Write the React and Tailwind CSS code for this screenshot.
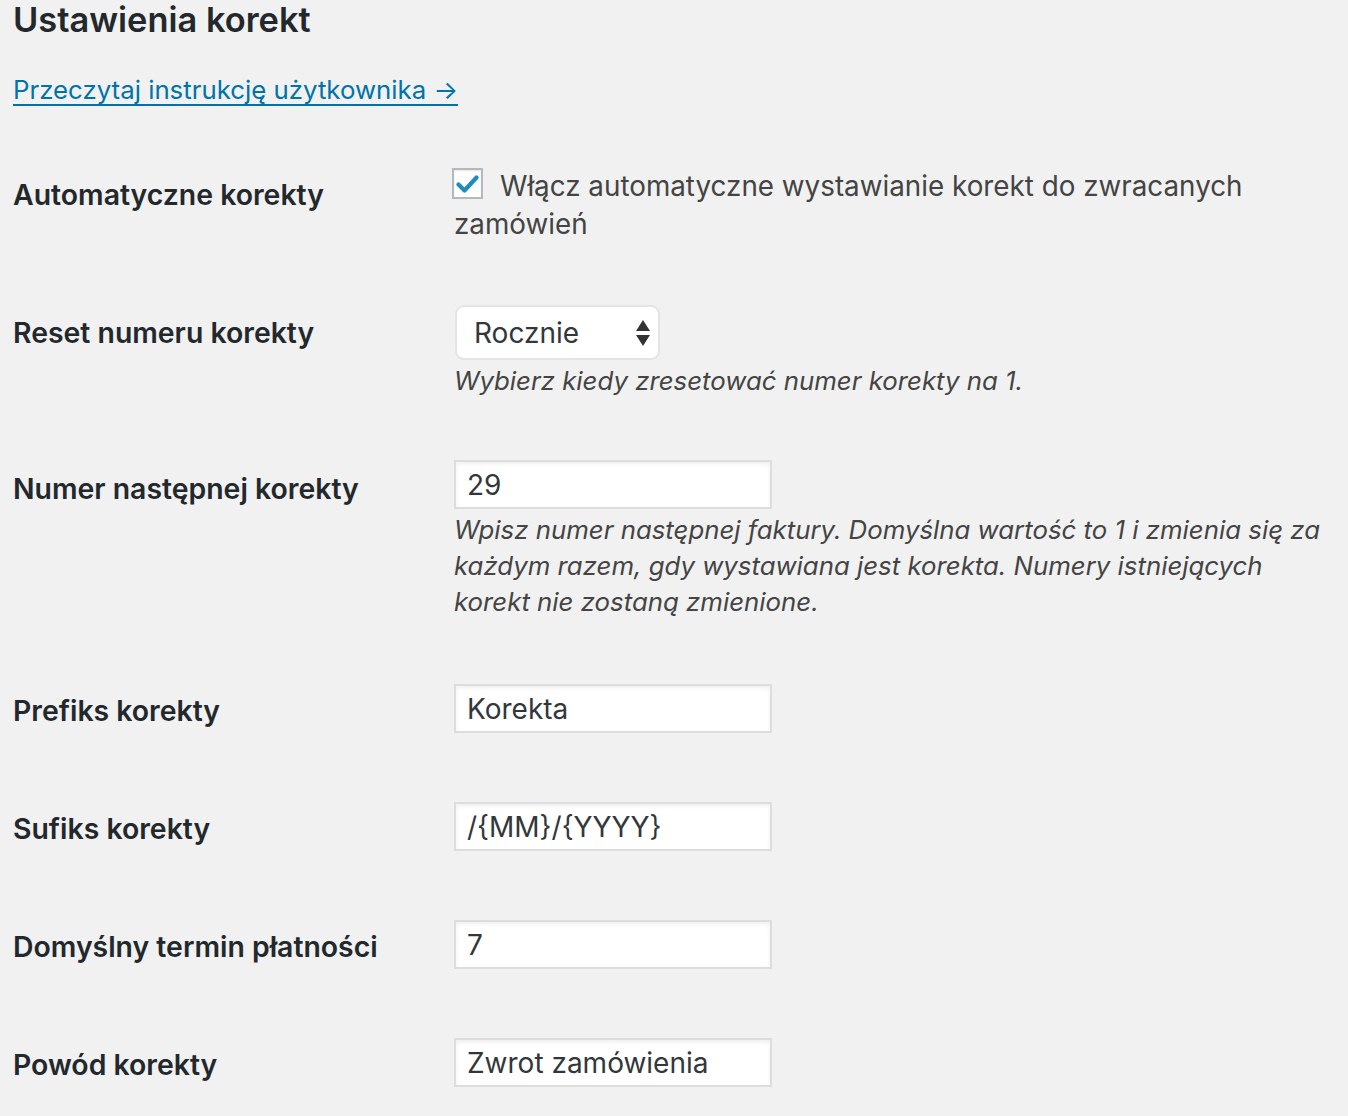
import React from "react";

const font = { fontFamily: "Inter, 'Noto Sans', sans-serif" };

function Label({ children }) {
  return (
    <div className="w-[441px] shrink-0 pt-[41px] text-[28.4px] leading-[36px] font-semibold text-[#23282d]">
      {children}
    </div>
  );
}

function TextInput({ value }) {
  return (
    <div className="w-[318px] h-[49px] bg-white border-2 border-[#dddddd] shadow-[inset_0_2px_4px_rgba(0,0,0,0.07)] flex items-center pl-[11px] text-[28px] text-[#32373c]">
      {value}
    </div>
  );
}

function Desc({ children }) {
  return (
    <p className="mt-[3px] text-[25.8px] leading-[36px] italic text-[#444]">{children}</p>
  );
}

function SimpleRow({ label, value }) {
  return (
    <div className="flex h-[118px]">
      <Label>{label}</Label>
      <div className="pt-[32px]">
        <TextInput value={value} />
      </div>
    </div>
  );
}

export default function App() {
  return (
    <div style={font} className="min-h-[1116px] bg-[#f1f1f1] pl-[13px] overflow-hidden">
      <h2 className="h-[40px] leading-[40px] text-[34.4px] font-semibold text-[#23282d]">
        Ustawienia korekt
      </h2>
      <div className="mt-[32px] h-[36px] leading-[36px]">
        <a href="#" className="text-[25.8px] text-[#0073aa] underline underline-offset-[5px] decoration-[2px]">
          Przeczytaj instrukcję użytkownika →
        </a>
      </div>

      <div className="mt-[28px]">
        {/* Row 1 */}
        <div className="flex h-[138px]">
          <Label>Automatyczne korekty</Label>
          <div className="pt-[31px] text-[27.8px] leading-[38px] text-[#444]">
            <span className="inline-flex align-top items-center">
              <span className="-ml-[2px] mt-[1px] w-[31px] h-[31px] bg-white border-2 border-[#b4b9be] shadow-[inset_0_1px_2px_rgba(0,0,0,0.1)] flex items-center justify-center">
                <svg width="23" height="20" viewBox="0 0 23 20">
                  <path d="M2.5 10.5 L8.5 16.5 L20.5 3.5" fill="none" stroke="#1e8cbe" strokeWidth="4.2" strokeLinecap="round" strokeLinejoin="round" />
                </svg>
              </span>
            </span>
            <span className="ml-[17px]">Włącz automatyczne wystawianie korekt do zwracanych</span>
            <br />
            <span>zamówień</span>
          </div>
        </div>

        {/* Row 2 */}
        <div className="flex h-[156px]">
          <Label>Reset numeru korekty</Label>
          <div className="pt-[31px]">
            <div className="ml-[1px] w-[205px] h-[55px] bg-white border-2 border-[#e4e4e4] rounded-[9px] flex items-center justify-between pl-[17px] pr-[7px] text-[28px] text-[#32373c]">
              <span>Rocznie</span>
              <svg width="16" height="30" viewBox="0 0 16 30">
                <path d="M8 2 L15 13 L1 13 Z" fill="#333" />
                <path d="M8 28 L15 17 L1 17 Z" fill="#333" />
              </svg>
            </div>
            <Desc>Wybierz kiedy zresetować numer korekty na 1.</Desc>
          </div>
        </div>

        {/* Row 3 */}
        <div className="flex h-[222px]">
          <Label>Numer następnej korekty</Label>
          <div className="pt-[30px]">
            <TextInput value="29" />
            <Desc>
              Wpisz numer następnej faktury. Domyślna wartość to 1 i zmienia się za
              <br />
              każdym razem, gdy wystawiana jest korekta. Numery istniejących
              <br />
              korekt nie zostaną zmienione.
            </Desc>
          </div>
        </div>

        <SimpleRow label="Prefiks korekty" value="Korekta" />
        <SimpleRow label="Sufiks korekty" value="/{MM}/{YYYY}" />
        <SimpleRow label="Domyślny termin płatności" value="7" />
        <SimpleRow label="Powód korekty" value="Zwrot zamówienia" />
      </div>
    </div>
  );
}
